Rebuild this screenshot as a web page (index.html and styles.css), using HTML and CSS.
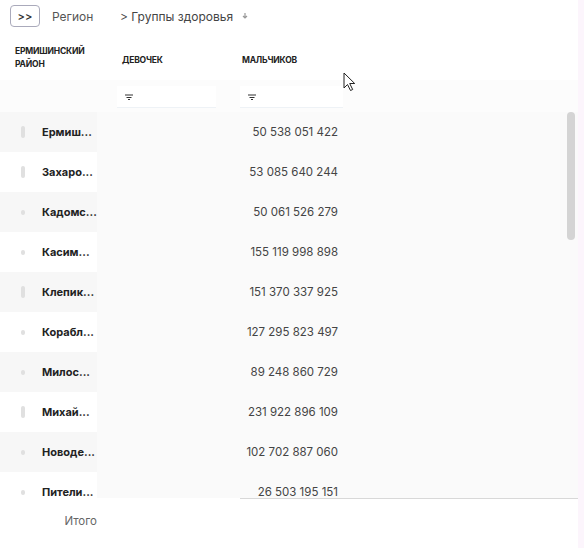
FILE: index.html
```html
<!DOCTYPE html>
<html lang="ru">
<head>
    <meta charset="UTF-8">
    <meta name="viewport" content="width=device-width, initial-scale=1.0">
    <title>Группы здоровья</title>
    <link rel="stylesheet" href="styles.css">
</head>
<body>

    <div class="page">
        <!-- Breadcrumbs -->
        <div class="toolbar">
            <button class="expand">&gt;&gt;</button>
            <span class="crumb faded">Регион</span>
            <span class="crumb">&gt; Группы здоровья</span>
            <svg class="crumb-icon" width="8" height="8" viewBox="0 0 8 8">
                <path d="M4 1v5M2 4l2 2 2-2" stroke="#999" stroke-width="1.2" fill="none"/>
            </svg>
        </div>

        <div class="table">
            <div class="head">
                <div class="head-name">Ермишинский район</div>
                <div class="head-col girls">Девочек</div>
                <div class="head-col boys">Мальчиков</div>
                <div></div>
            </div>

            <div class="filters">
                <div></div>
                <div class="filter girls"><svg width="8" height="6" viewBox="0 0 8 6"><path d="M0 1h8M1.5 3.5h5M3 5.5h2" stroke="#333" stroke-width="1"/></svg></div>
                <div class="filter boys"><svg width="8" height="6" viewBox="0 0 8 6"><path d="M0 1h8M1.5 3.5h5M3 5.5h2" stroke="#333" stroke-width="1"/></svg></div>
                <div></div>
            </div>

            <div class="body">
                <div id="rows"></div>
                <div class="scroll-thumb"></div>
            </div>

            <div class="foot">
                <div class="total">Итого</div>
                <div></div>
                <div class="foot-line first"></div>
                <div class="foot-line"></div>
            </div>
        </div>

        <!-- mouse pointer -->
        <svg class="pointer" width="13" height="20" viewBox="0 0 13 20">
            <path d="M1 1v15l3.5-3.5 3 6 2.2-1-3-6h5z" fill="#fff" stroke="#222" stroke-width="1"/>
        </svg>
    </div>

    <script>
        // short names as the grid shows them in a narrow column
        const districts = [
            { name: "Ермиш...", boys: "50 538 051 422", handle: "bar" },
            { name: "Захаро...", boys: "53 085 640 244", handle: "bar" },
            { name: "Кадомс...", boys: "50 061 526 279", handle: "dot" },
            { name: "Касим...", boys: "155 119 998 898", handle: "dot" },
            { name: "Клепик...", boys: "151 370 337 925", handle: "bar" },
            { name: "Корабл...", boys: "127 295 823 497", handle: "dot" },
            { name: "Милос...", boys: "89 248 860 729", handle: "dot" },
            { name: "Михай...", boys: "231 922 896 109", handle: "bar" },
            { name: "Новоде...", boys: "102 702 887 060", handle: "dot" },
            { name: "Пители...", boys: "26 503 195 151", handle: "dot" },
        ];

        const rows = document.getElementById('rows');
        districts.forEach((d, i) => {
            rows.innerHTML += `
                <div class="row ${i % 2 === 0 ? 'odd' : ''}">
                    <div class="name-cell"><span class="handle ${d.handle}"></span><span class="name">${d.name}</span></div>
                    <div class="cell"></div>
                    <div class="cell num">${d.boys}</div>
                    <div class="cell"></div>
                </div>
            `;
        });
    </script>
</body>
</html>
```

FILE: styles.css
```css
body {
    margin: 0;
    background-color: #fcf5fc;
    font-family: Inter, "Noto Sans", sans-serif;
    color: #222;
}

.page {
    position: relative;
    width: 578px;
    height: 548px;
    background-color: #fff;
    overflow: hidden;
}

.toolbar {
    display: flex;
    align-items: center;
    height: 32px;
    padding-left: 10px;
    font-size: 12px;
    color: #444;
}

.expand {
    width: 30px;
    height: 22px;
    padding: 0;
    border: 1px solid #aab;
    border-radius: 4px;
    background-color: #fff;
    font-family: inherit;
    font-size: 11px;
    font-weight: 600;
    color: #333;
}

.crumb {
    white-space: nowrap;
}

.crumb.faded {
    width: 48px;
    margin-left: 12px;
    margin-right: 20px;
    overflow: hidden;
    color: #555;
}

.crumb-icon {
    margin-left: 8px;
}

.head, .filters, .row, .foot {
    display: grid;
    grid-template-columns: 97px 123px 123px 1fr;
}

.head {
    height: 44px;
    margin-top: 4px;
    align-items: center;
}

.head-name {
    padding-left: 15px;
    padding-right: 2px;
    font-size: 8.5px;
    font-weight: 700;
    line-height: 13px;
    text-transform: uppercase;
    letter-spacing: -0.2px;
}

.head-col {
    font-size: 8.5px;
    font-weight: 700;
    text-transform: uppercase;
    letter-spacing: -0.2px;
    padding-top: 4px;
}

.head-col.girls {
    padding-left: 25px;
}

.head-col.boys {
    padding-left: 22px;
}

.filters {
    height: 32px;
    background-color: #fcfcfc;
}

.filter {
    display: flex;
    align-items: center;
    margin: 6px 4px 4px 20px;
    padding-left: 8px;
    background-color: #fff;
    border-bottom: 1px solid #eef2f6;
}

.filter.boys {
    margin-left: 20px;
    margin-right: 0;
}

.body {
    position: relative;
    height: 386px;
    overflow: hidden;
}

.row {
    height: 40px;
    align-items: center;
    background-color: #fafafa;
}

.row.odd .name-cell {
    background-color: #f7f7f7;
}

.name-cell {
    display: flex;
    align-items: center;
    height: 100%;
    background-color: #fff;
}

.handle {
    width: 4px;
    height: 12px;
    margin-left: 21px;
    margin-right: 17px;
    border-radius: 2px;
    background-color: #e0e0e0;
}

.handle.dot {
    height: 5px;
}

.name {
    white-space: nowrap;
    font-size: 11px;
    font-weight: 700;
    color: #222;
}

.cell {
    height: 100%;
}

.num {
    display: flex;
    align-items: center;
    justify-content: flex-end;
    padding-right: 5px;
    font-size: 11.5px;
    color: #444;
    white-space: nowrap;
}

.scroll-thumb {
    position: absolute;
    top: 0;
    right: 3px;
    width: 8px;
    height: 128px;
    border-radius: 4px;
    background-color: #d4d4d4;
}

.foot {
    height: 50px;
    background-color: #fff;
}

.total {
    padding-top: 16px;
    text-align: right;
    font-size: 11.5px;
    color: #666;
}

.foot-line {
    border-top: 1px solid #d8d8d8;
}

.foot-line.first {
    margin-left: 20px;
}

.pointer {
    position: absolute;
    left: 343px;
    top: 72px;
}
```
